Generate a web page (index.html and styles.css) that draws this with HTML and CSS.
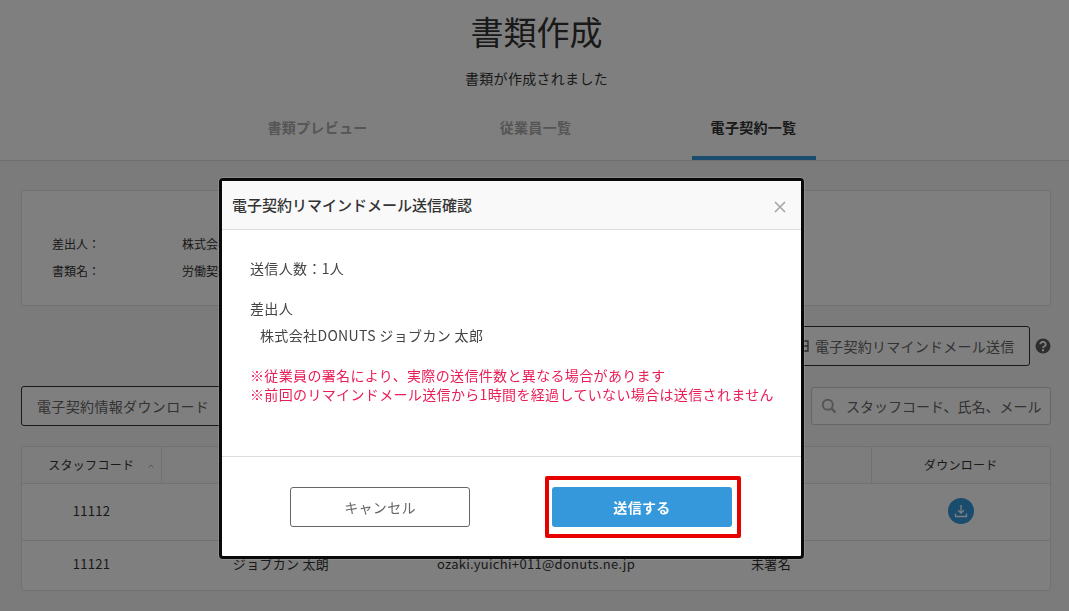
FILE: index.html
```html
<!DOCTYPE html>
<html lang="ja">
<head>
    <meta charset="UTF-8">
    <meta name="viewport" content="width=device-width, initial-scale=1.0">
    <title>書類作成</title>
    <link rel="stylesheet" href="styles.css">
</head>
<body>
    <header class="page-head">
        <h1>書類作成</h1>
        <p class="lead">書類が作成されました</p>
        <nav class="tabs">
            <a class="tab">書類プレビュー</a>
            <a class="tab">従業員一覧</a>
            <a class="tab active">電子契約一覧</a>
        </nav>
    </header>

    <main class="content">
        <section class="info-card">
            <div class="info-row"><span class="info-label">差出人：</span><span>株式会社DONUTS ジョブカン 太郎</span></div>
            <div class="info-row"><span class="info-label">書類名：</span><span>労働契約書</span></div>
        </section>

        <div class="remind-row">
            <button class="btn-outline remind-btn">
                <svg class="mail-icon" width="14" height="14" viewBox="0 0 14 14" fill="none" stroke="#555" stroke-width="1.3"><path d="M1 2h12v10H1zM1 7h12M7 2v10"/></svg>
                電子契約リマインドメール送信
            </button>
            <svg class="help-icon" width="16" height="16" viewBox="0 0 16 16">
                <circle cx="8" cy="8" r="7.5" fill="#5c5c5c"/>
                <path d="M5.300 6.200a2.700 2.400 0 1 1 4.200 2c-1 .6-1.500 1-1.500 1.900" fill="none" stroke="white" stroke-width="1.900"/>
                <rect x="7" y="11.200" width="2" height="2" fill="white"/>
            </svg>
        </div>

        <div class="tool-row">
            <button class="btn-outline download-btn">電子契約情報ダウンロード</button>
            <div class="search-box">
                <svg width="16" height="16" viewBox="0 0 16 16"><circle cx="6.800" cy="6.800" r="5" fill="none" stroke="#aaa" stroke-width="2"/><path d="M10.600 10.600l4 4" stroke="#aaa" stroke-width="2.200"/></svg>
                <span>スタッフコード、氏名、メール</span>
            </div>
        </div>

        <div class="table-wrap">
            <table class="staff-table">
                <thead>
                    <tr>
                        <th class="col-code">スタッフコード<svg class="sort" width="6" height="4" viewBox="0 0 6 4"><path d="M.5 3.500L3 1l2.500 2.500" fill="none" stroke="#aaa"/></svg></th>
                        <th class="col-name"></th>
                        <th class="col-mail"></th>
                        <th class="col-status"></th>
                        <th class="col-dl">ダウンロード</th>
                    </tr>
                </thead>
                <tbody>
                    <tr class="row-first">
                        <td>11112</td>
                        <td></td>
                        <td></td>
                        <td></td>
                        <td>
                            <span class="dl-icon">
                                <svg width="14" height="14" viewBox="0 0 14 14" fill="none" stroke="white" stroke-width="1.300"><path d="M7 1v8M4 6.200l3 3 3-3M1.500 9.500v3h11v-3"/></svg>
                            </span>
                        </td>
                    </tr>
                    <tr class="row-second">
                        <td>11121</td>
                        <td>ジョブカン 太朗</td>
                        <td>ozaki.yuichi+011@donuts.ne.jp</td>
                        <td>未署名</td>
                        <td></td>
                    </tr>
                </tbody>
            </table>
        </div>
    </main>

    <div class="overlay"></div>

    <div class="modal">
        <div class="modal-head">
            <h2>電子契約リマインドメール送信確認</h2>
            <svg class="close" width="12" height="12" viewBox="0 0 12 12"><path d="M1 1l10 10M11 1L1 11" stroke="#a8a8a8" stroke-width="1.700"/></svg>
        </div>
        <div class="modal-body">
            <p class="count">送信人数：1人</p>
            <p class="sender-label">差出人</p>
            <p class="sender-name">株式会社DONUTS ジョブカン 太郎</p>
            <p class="notice">※従業員の署名により、実際の送信件数と異なる場合があります<br>※前回のリマインドメール送信から1時間を経過していない場合は送信されません</p>
        </div>
        <div class="modal-foot">
            <button class="btn-cancel">キャンセル</button>
            <div class="highlight"><button class="btn-send">送信する</button></div>
        </div>
    </div>
</body>
</html>
```

FILE: styles.css
```css
* {
    box-sizing: border-box;
}
html, body {
    height: 611px;
    overflow: hidden;
}
body {
    margin: 0;
    font-family: "Noto Sans CJK JP", "Noto Sans", sans-serif;
    font-size: 14px;
    color: #333;
    background-color: #f6f6f6;
}
button {
    font-family: inherit;
}

.page-head {
    height: 161px;
    padding-left: 4px;
    background: white;
    border-bottom: 1px solid #ddd;
    text-align: center;
    overflow: hidden;
}
h1 {
    margin: 8px 0 0;
    font-size: 33px;
    line-height: 46px;
    font-weight: 400;
    color: #333;
}
.lead {
    margin: 14px 0 0;
    line-height: 20px;
    letter-spacing: 0.3px;
}
.tabs {
    display: flex;
    justify-content: center;
    gap: 94px;
    margin: 20px 0 0 -2px;
}
.tab {
    width: 124px;
    height: 52px;
    padding-top: 9px;
    line-height: 20px;
    font-weight: 700;
    letter-spacing: 0.3px;
    color: #aaa;
}
.tab.active {
    color: #333;
    border-bottom: 4px solid #3498db;
}

.content {
    padding: 29px 18px 0 21px;
}
.info-card {
    height: 116px;
    padding-top: 43px;
    background: white;
    border: 1px solid #e2e2e2;
    border-radius: 3px;
    font-size: 12px;
}
.info-row {
    display: flex;
    height: 27px;
    line-height: 20px;
    padding-left: 30px;
}
.info-label {
    width: 130px;
}
.remind-row {
    display: flex;
    justify-content: flex-end;
    align-items: center;
    gap: 5px;
    margin-top: 20px;
}
.btn-outline {
    height: 40px;
    background: white;
    border: 1px solid #333;
    border-radius: 3px;
    color: #666;
    font-size: 14px;
}
.remind-btn {
    display: flex;
    align-items: center;
    gap: 6px;
    width: 260px;
    padding: 0 15px 0 24px;
    white-space: nowrap;
    letter-spacing: 0.25px;
}
.mail-icon, .help-icon {
    flex: none;
}
.tool-row {
    display: flex;
    justify-content: space-between;
    margin-top: 20px;
}
.download-btn {
    width: 260px;
    text-align: left;
    padding-left: 15px;
    letter-spacing: 0.35px;
}
.search-box {
    display: flex;
    align-items: center;
    gap: 9px;
    width: 240px;
    height: 38px;
    margin-top: 1px;
    padding-left: 9px;
    background: white;
    border: 1px solid #ccc;
    border-radius: 3px;
    color: #666;
    white-space: nowrap;
    overflow: hidden;
}

.table-wrap {
    margin-top: 20px;
    height: 145px;
    background: white;
    border: 1px solid #e2e2e2;
    border-radius: 3px;
    overflow: hidden;
}
.staff-table {
    width: 100%;
    border-collapse: collapse;
    table-layout: fixed;
    font-size: 13px;
    letter-spacing: 0.3px;
}
.staff-table th {
    height: 36px;
    padding: 0;
    background: #fafafa;
    border-bottom: 1px solid #e2e2e2;
    border-right: 1px solid #e2e2e2;
    font-size: 12px;
    font-weight: 400;
    position: relative;
}
.staff-table th:last-child {
    border-right: none;
}
.staff-table td {
    padding: 0 0 2px;
    text-align: center;
}
.row-first td {
    height: 57px;
    border-bottom: 1px solid #e2e2e2;
}
.row-second td {
    height: 49px;
}
.col-code { width: 139px; }
.col-name { width: 240px; }
.col-mail { width: 270px; }
.col-status { width: 200px; }
.sort {
    position: absolute;
    right: 7px;
    top: 17px;
}
.dl-icon {
    display: inline-flex;
    align-items: center;
    justify-content: center;
    width: 26px;
    height: 26px;
    border-radius: 50%;
    background: #3498db;
    vertical-align: middle;
}

.overlay {
    position: fixed;
    inset: 0;
    background: rgba(0,0,0,0.5);
}

.modal {
    position: fixed;
    left: 219px;
    top: 178px;
    width: 585px;
    height: 381px;
    display: flex;
    flex-direction: column;
    background: white;
    border: 3px solid #0a0a0a;
    border-radius: 4px;
    box-shadow: 0 0 0 1px rgba(255,255,255,0.12);
}
.modal-head {
    display: flex;
    justify-content: space-between;
    align-items: center;
    height: 49px;
    padding: 0 15px 0 10px;
    background: #f9f9f9;
    border-bottom: 1px solid #ddd;
}
.modal-head h2 {
    margin: 0;
    font-size: 15px;
    line-height: 20px;
    font-weight: 500;
    color: #333;
}
.close {
    margin-top: 4px;
}
.modal-body {
    flex: 1;
    padding: 28px 0 0 28px;
    line-height: 20px;
    letter-spacing: 0.35px;
    color: #444;
}
.modal-body p {
    margin: 0;
}
.modal-body .sender-label {
    padding-top: 20px;
}
.modal-body .sender-name {
    margin-top: 7px;
    padding-left: 10px;
}
.modal-body .notice {
    margin-top: 21px;
    color: #e91e57;
    line-height: 19px;
    white-space: nowrap;
}
.modal-foot {
    display: flex;
    align-items: flex-start;
    height: 100px;
    padding: 19px 0 0 68px;
    border-top: 1px solid #ddd;
}
.btn-cancel {
    width: 180px;
    height: 40px;
    margin-top: 11px;
    background: white;
    border: 1px solid #666;
    border-radius: 3px;
    color: #666;
    font-size: 14px;
    letter-spacing: 0.35px;
}
.highlight {
    margin-left: 75px;
    padding: 7px 5px 7px 3px;
    border: 4px solid #e60000;
    border-radius: 2px;
}
.btn-send {
    display: block;
    width: 180px;
    height: 40px;
    background: #3498db;
    border: none;
    border-radius: 3px;
    color: white;
    font-size: 14px;
    font-weight: 700;
    letter-spacing: 0.35px;
}
```
